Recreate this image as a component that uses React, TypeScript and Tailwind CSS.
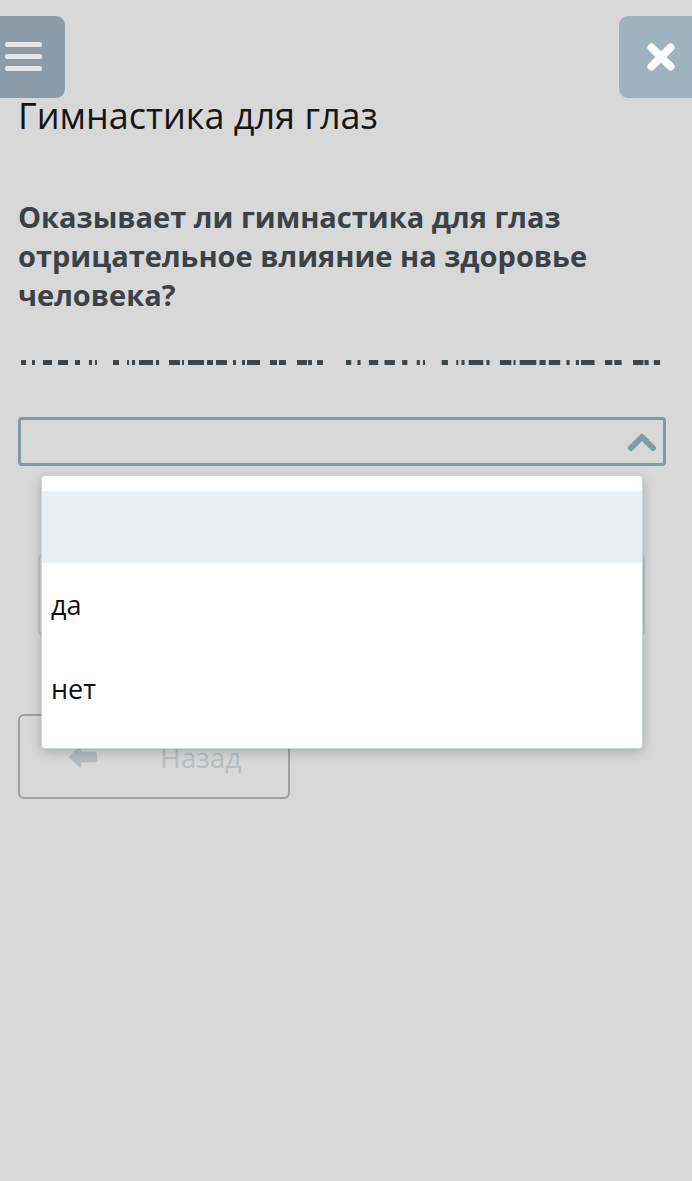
import React from "react";

const dashA: [number, number][] = [
  [21, 26], [32, 35], [43, 52], [58, 68], [75, 80], [89, 92], [95, 97],
  [113, 119], [127, 129], [132, 135], [139, 153], [156, 159],
  [169, 180], [182, 184], [188, 204], [207, 213], [216, 227], [233, 236],
  [242, 245], [247, 260], [270, 277], [279, 286], [297, 307], [308, 312], [317, 323],
];

function Dashes() {
  const map = (x: number) => 346 + (x - 21) * 1.04;
  const all = [...dashA, ...dashA.map(([a, b]) => [map(a), map(b)] as [number, number])];
  return (
    <svg width="692" height="8" viewBox="0 0 692 8" className="block">
      {all.map(([a, b], i) => (
        <rect key={i} x={a} y={1} width={b - a} height={5} fill="#3c464c" />
      ))}
    </svg>
  );
}

export default function App() {
  return (
    <div
      className="relative min-h-[1181px] w-full bg-[#d8d8d8] overflow-hidden"
      style={{ fontFamily: '"Open Sans", "Noto Sans", sans-serif' }}
    >
      {/* top bar */}
      <div className="flex justify-between pt-[16px]">
        <div className="relative h-[82px] w-[65px] rounded-r-[9px] bg-[#8b9ba7]">
          <div className="absolute left-[5px] top-[26px] flex flex-col gap-[7px]">
            <div className="h-[5px] w-[37px] rounded-[2px] bg-[#e3e7ea]" />
            <div className="h-[5px] w-[37px] rounded-[2px] bg-[#e3e7ea]" />
            <div className="h-[5px] w-[37px] rounded-[2px] bg-[#e3e7ea]" />
          </div>
        </div>
        <div className="flex h-[82px] w-[73px] items-center justify-center rounded-l-[9px] bg-[#9fb3bf]">
          <svg width="34" height="34" viewBox="-17 -17 34 34" className="ml-[10px]">
            <line x1="-9.5" y1="-9.5" x2="9.5" y2="9.5" stroke="#ffffff" strokeWidth="8" strokeLinecap="round" />
            <line x1="9.5" y1="-9.5" x2="-9.5" y2="9.5" stroke="#ffffff" strokeWidth="8" strokeLinecap="round" />
          </svg>
        </div>
      </div>

      {/* title */}
      <h1 className="mt-[-6px] px-[18px] text-[36px] leading-[48px] font-normal text-[#151515]">
        Гимнастика для глаз
      </h1>

      {/* question */}
      <p className="mt-[57px] pl-[18px] pr-[30px] text-[29px] leading-[39px] font-bold text-[#3a4248]">
        Оказывает ли гимнастика для глаз отрицательное влияние на здоровье человека?
      </p>

      <div className="mt-[45px]">
        <Dashes />
      </div>

      {/* select */}
      <div className="mt-[50px] pl-[18px] pr-[26px]">
        <div className="flex h-[49px] items-center justify-end rounded-[4px] border-[3px] border-[#7f9ba3] pr-[6px]">
          <svg width="30" height="20" viewBox="0 0 30 20">
            <polyline points="4,16 15,5 26,16" fill="none" stroke="#7f9ba3" strokeWidth="6" strokeLinecap="round" strokeLinejoin="round" />
          </svg>
        </div>
      </div>

      {/* hidden element behind dropdown */}
      <div className="mt-[88px] pl-[38px] pr-[47px]">
        <div className="h-[82px] rounded-[5px] border-[2px] border-[#bfc5c8]" />
      </div>

      {/* back button */}
      <div className="mt-[78px] px-[18px]">
        <div className="flex h-[85px] w-[272px] items-center rounded-[6px] border-[2px] border-[#9aa0a4]">
          <svg width="30" height="22" viewBox="0 0 30 22" className="ml-[48px]">
            <path d="M2 11 L12 2 L12 7 L26 7 Q28 7 28 9 L28 13 Q28 15 26 15 L12 15 L12 20 Z" fill="#b4babe" stroke="#b4babe" strokeWidth="2.5" strokeLinejoin="round" />
          </svg>
          <span className="ml-[62px] text-[28px] leading-none text-[#b9bec1]">Назад</span>
        </div>
      </div>

      {/* dropdown menu */}
      <div className="absolute left-[41px] top-[475px] w-[602px] rounded-[4px] border border-[#c9d6da] bg-white pt-[15px] pb-[17px] shadow-[0_3px_12px_rgba(0,0,0,0.22)]">
        <div className="h-[72px] bg-[#e9eff2]" />
        <div className="flex h-[84px] items-center px-[9px] text-[27px] text-[#111111]">да</div>
        <div className="flex h-[84px] items-center px-[9px] text-[27px] text-[#111111]">нет</div>
      </div>
    </div>
  );
}
